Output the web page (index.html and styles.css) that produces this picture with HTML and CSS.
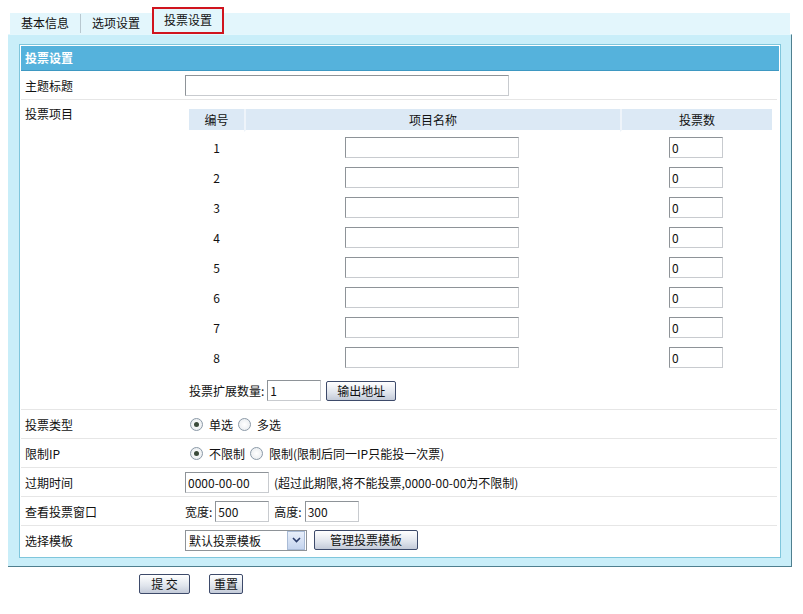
FILE: index.html
```html
<!DOCTYPE html>
<html lang="zh-CN">
<head>
  <meta charset="UTF-8">
  <title>投票设置</title>
  <link rel="stylesheet" href="styles.css">
</head>
<body>
  <div class="tabs">
    <span class="tab">基本信息</span><span class="sep"></span><span class="tab">选项设置</span><span class="tab active">投票设置</span>
  </div>
  <div class="frame">
    <div class="panel">
      <div class="panel-title">投票设置</div>
      <table class="form">
        <tr class="row">
          <td class="lbl">主题标题</td>
          <td class="val"><div class="line"><input class="txt w-title" type="text"></div></td>
        </tr>
        <tr class="row">
          <td class="lbl top">投票项目</td>
          <td class="val items">
            <table class="vote">
              <thead>
                <tr><th class="c-num">编号</th><th class="c-name">项目名称</th><th class="c-count">投票数</th></tr>
              </thead>
              <tbody>
                <tr><td>1</td><td><input class="txt w-name" type="text"></td><td><input class="txt w-count" type="text" value="0"></td></tr>
                <tr><td>2</td><td><input class="txt w-name" type="text"></td><td><input class="txt w-count" type="text" value="0"></td></tr>
                <tr><td>3</td><td><input class="txt w-name" type="text"></td><td><input class="txt w-count" type="text" value="0"></td></tr>
                <tr><td>4</td><td><input class="txt w-name" type="text"></td><td><input class="txt w-count" type="text" value="0"></td></tr>
                <tr><td>5</td><td><input class="txt w-name" type="text"></td><td><input class="txt w-count" type="text" value="0"></td></tr>
                <tr><td>6</td><td><input class="txt w-name" type="text"></td><td><input class="txt w-count" type="text" value="0"></td></tr>
                <tr><td>7</td><td><input class="txt w-name" type="text"></td><td><input class="txt w-count" type="text" value="0"></td></tr>
                <tr><td>8</td><td><input class="txt w-name" type="text"></td><td><input class="txt w-count" type="text" value="0"></td></tr>
              </tbody>
            </table>
            <div class="line extend">
              投票扩展数量:<input class="txt w-small" type="text" value="1"><span class="btn btn-out">输出地址</span>
            </div>
          </td>
        </tr>
        <tr class="row">
          <td class="lbl">投票类型</td>
          <td class="val">
            <div class="line"><span class="radio on"></span>单选<span class="radio"></span>多选</div>
          </td>
        </tr>
        <tr class="row">
          <td class="lbl">限制IP</td>
          <td class="val">
            <div class="line"><span class="radio on"></span>不限制<span class="radio"></span>限制(限制后同一IP只能投一次票)</div>
          </td>
        </tr>
        <tr class="row">
          <td class="lbl">过期时间</td>
          <td class="val"><div class="line"><input class="txt w-date" type="text" value="0000-00-00"><span class="note">(超过此期限,将不能投票,0000-00-00为不限制)</span></div></td>
        </tr>
        <tr class="row">
          <td class="lbl">查看投票窗口</td>
          <td class="val"><div class="line">宽度:<input class="txt w-small" type="text" value="500">高度:<input class="txt w-small" type="text" value="300"></div></td>
        </tr>
        <tr class="row">
          <td class="lbl">选择模板</td>
          <td class="val">
            <div class="line">
              <span class="select">默认投票模板<span class="arrow"><svg width="9" height="6" viewBox="0 0 9 6"><path d="M1 1 L4.5 4.5 L8 1" fill="none" stroke="#2a3c6a" stroke-width="1.6"/></svg></span></span>
              <span class="btn btn-tpl">管理投票模板</span>
            </div>
          </td>
        </tr>
      </table>
    </div>
  </div>
  <div class="actions">
    <span class="btn btn-submit">提 交</span>
    <span class="btn btn-reset">重置</span>
  </div>
</body>
</html>
```

FILE: styles.css
```css
body {
  margin: 0;
  font-family: "Noto Sans CJK SC", "DejaVu Sans", sans-serif;
  font-size: 12px;
  color: #111;
  background: #fff;
}
.tabs {
  margin: 7px 0 0 10px;
  height: 27px;
  display: flex;
  align-items: flex-end;
  background: linear-gradient(#ffffff 0, #ffffff 6px, #e3f6fc 6px);
  width: 780px;
}
.tab {
  display: inline-block;
  height: 20px;
  line-height: 18px;
  padding: 0 11px;
}
.sep {
  display: inline-block;
  width: 1px;
  height: 19px;
  margin-bottom: 1px;
  background: #b8c8d0;
}
.tab.active {
  height: 23px;
  line-height: 22px;
  padding: 0 10px;
  margin-left: 1px;
  border: 2px solid #d0141e;
  background: #e3f6fc;
}
.frame {
  margin-left: 8px;
  width: 762px;
  padding: 9px 10px 8px 11px;
  background: #c9eef9;
  border-top: 1px solid #e4f7fd;
  border-right: 1px solid #4f7f8f;
  border-bottom: 1px solid #4f7f8f;
}
.panel {
  background: #fff;
  border: 1px solid #7fc6dc;
  padding: 1px 1px 3px 1px;
}
.panel-title {
  height: 24px;
  line-height: 24px;
  padding-left: 4px;
  background: #55b2dc;
  color: #fff;
  font-weight: bold;
  border-bottom: 1px solid #3e98c2;
}
.form {
  width: 756px;
  border-collapse: collapse;
}
.row td.lbl,
.row td.val {
  border-bottom: 1px solid #e6e6e6;
  height: 28px;
  padding: 0 4px;
  white-space: nowrap;
}
.row:last-child td {
  border-bottom: none;
}
.lbl {
  width: 152px;
}
.lbl.top {
  vertical-align: top;
  padding-top: 5px !important;
}
.val.items {
  padding: 9px 4px 8px 4px !important;
}
.line {
  display: flex;
  align-items: center;
  height: 21px;
}
.txt {
  box-sizing: border-box;
  height: 21px;
  border: 1px solid #8e9398;
  border-right-color: #c8cbcf;
  border-bottom-color: #c8cbcf;
  font-family: inherit;
  font-size: 12px;
  padding: 0 2px;
  vertical-align: middle;
  color: #111;
}
.w-title { width: 324px; }
.w-name { width: 174px; }
.w-count { width: 54px; }
.w-small { width: 54px; margin: 0 5px 0 3px; }
.w-date { width: 84px; }
.note { margin-left: 5px; }
.vote {
  margin-left: 4px;
  width: 583px;
  border-collapse: separate;
  border-spacing: 0;
}
.vote th {
  background: #dce9f5;
  background-clip: padding-box;
  font-weight: normal;
  height: 21px;
  padding: 0;
  border-left: 2px solid #eef4fa;
  border-bottom: 2px solid #fff;
}
.vote th:first-child { border-left: none; }
.c-num { width: 55px; }
.c-count { width: 150px; }
.vote td {
  height: 30px;
  padding: 0;
  text-align: center;
}
.extend {
  margin: 8px 0 0 4px;
}
.btn {
  display: inline-block;
  box-sizing: border-box;
  height: 20px;
  line-height: 18px;
  text-align: center;
  border: 1px solid #3d4a6a;
  border-radius: 2px;
  background: linear-gradient(#ffffff, #dfe4ec 60%, #c3cad8);
  color: #111;
}
.btn-out { width: 70px; }
.btn-tpl { width: 104px; margin-left: 7px; }
.radio {
  display: inline-block;
  box-sizing: border-box;
  width: 13px;
  height: 13px;
  border: 1px solid #8c9aa8;
  border-radius: 50%;
  background: radial-gradient(#ffffff, #e4e8ec);
  margin: 0 6px 0 5px;
  position: relative;
}
.radio:first-child { margin-left: 5px; }
.radio.on::after {
  content: "";
  position: absolute;
  left: 3px;
  top: 3px;
  width: 5px;
  height: 5px;
  border-radius: 50%;
  background: #3a4a3a;
}
.select {
  display: inline-flex;
  align-items: center;
  justify-content: space-between;
  box-sizing: border-box;
  width: 122px;
  height: 21px;
  border: 1px solid #8e9398;
  padding-left: 3px;
}
.arrow {
  display: flex;
  align-items: center;
  justify-content: center;
  width: 16px;
  height: 17px;
  margin-right: 1px;
  border: 1px solid #a9bbd6;
  background: linear-gradient(#e8effa, #c4d4ee);
}
.actions {
  margin: 7px 0 0 139px;
  display: flex;
  gap: 19px;
}
.btn-submit { width: 51px; }
.btn-reset { width: 34px; }
```
